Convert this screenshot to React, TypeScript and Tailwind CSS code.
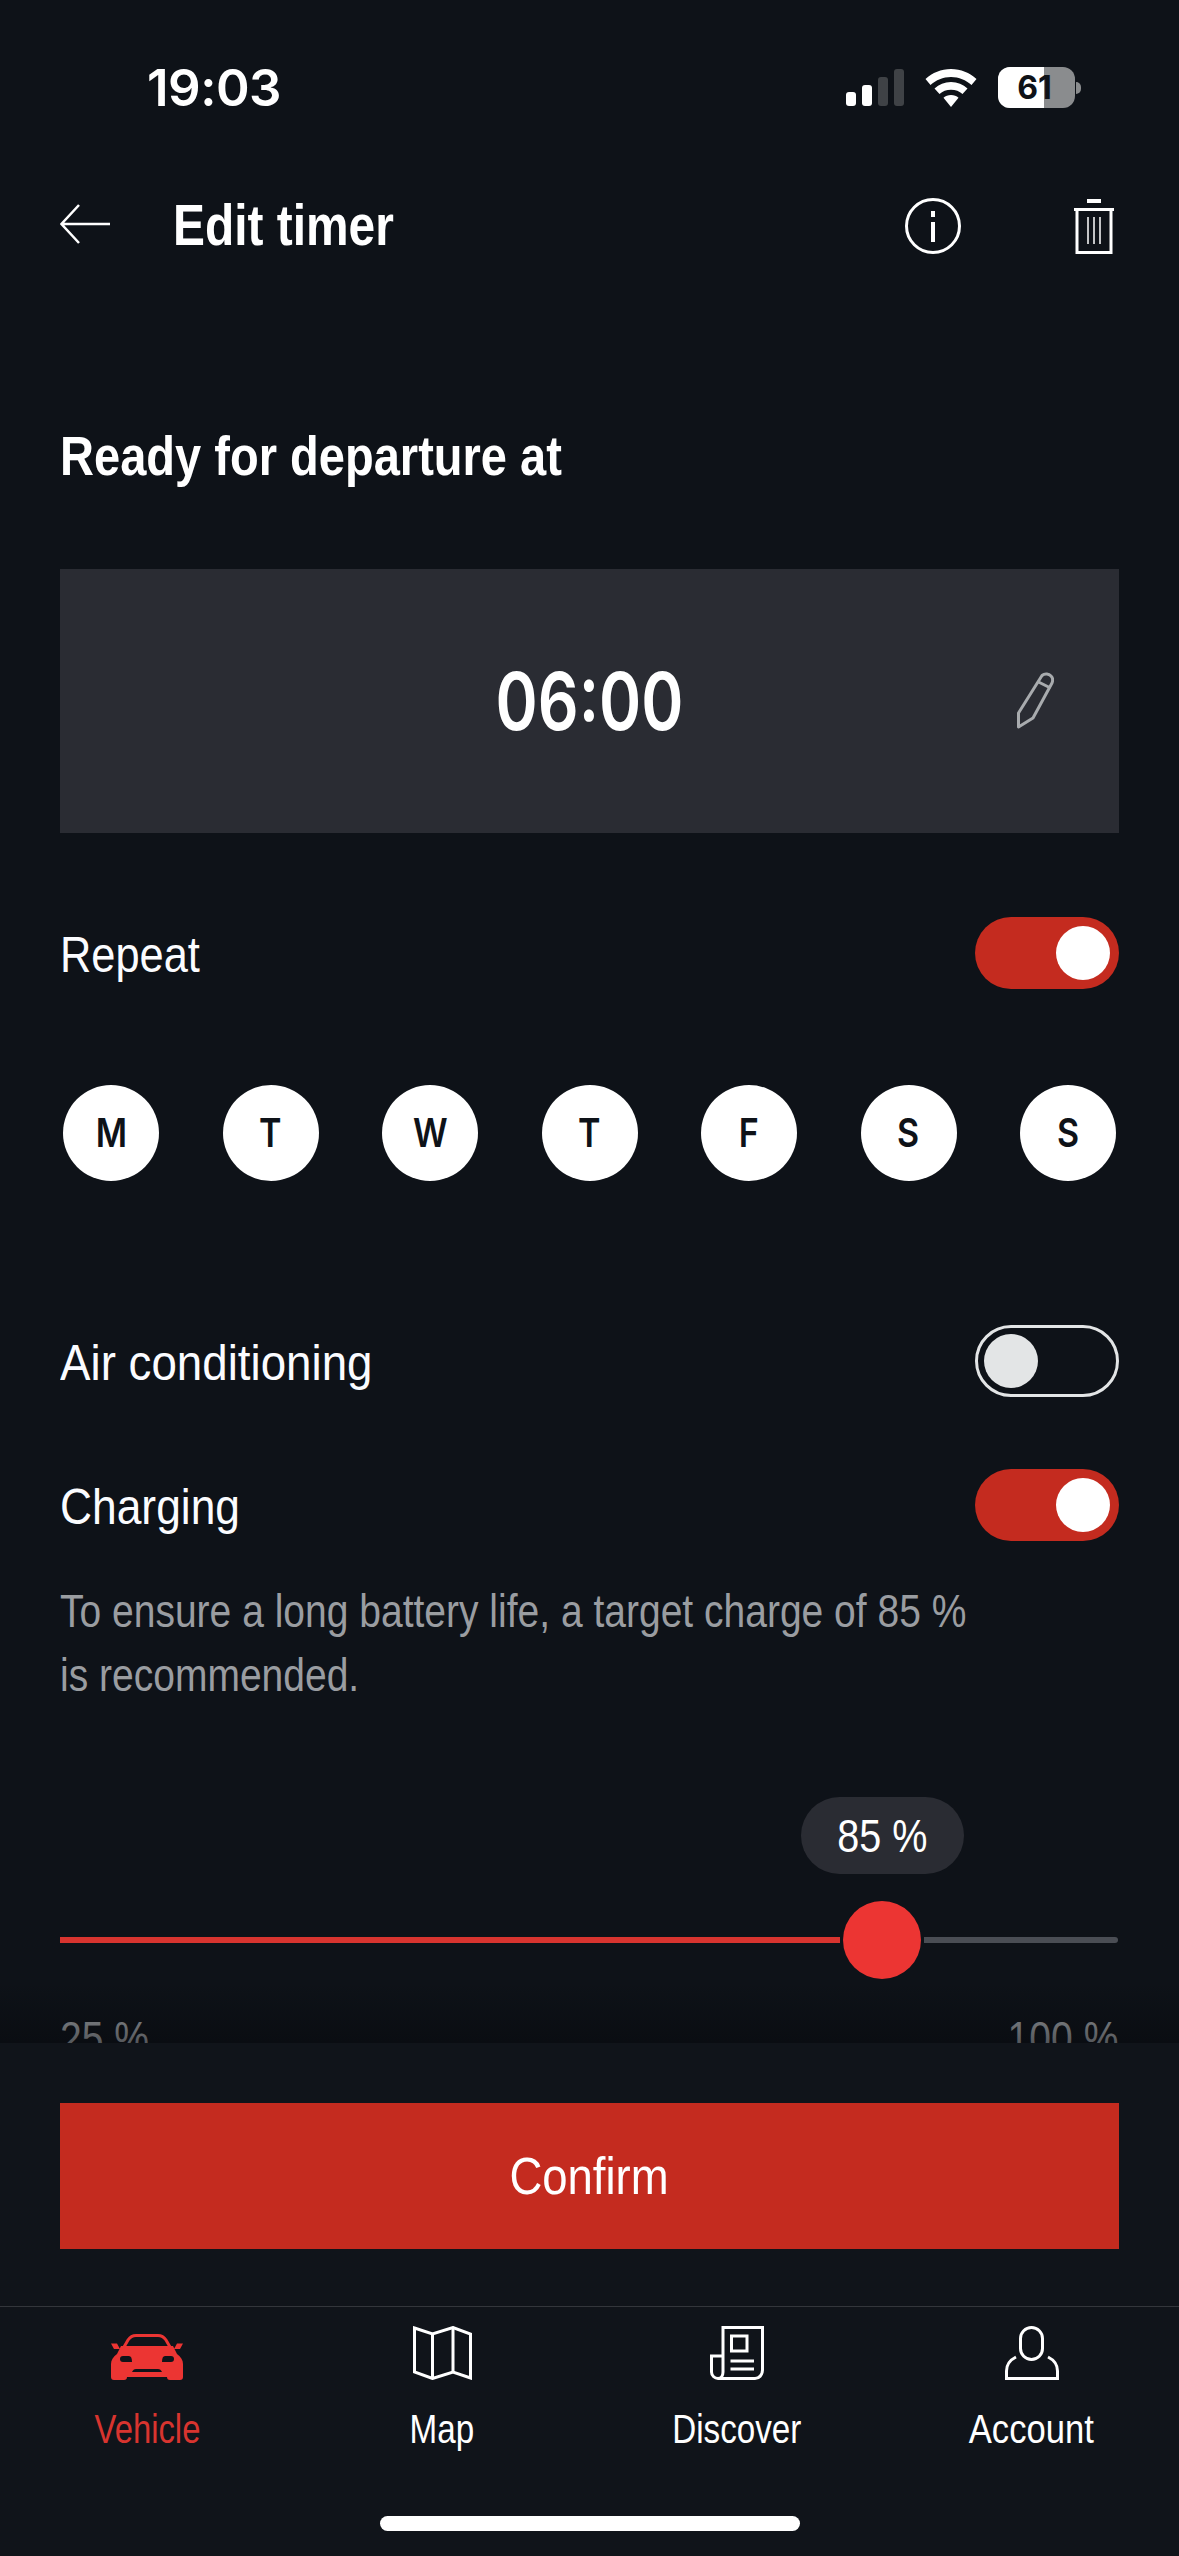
import React from "react";

const sans = "font-['Liberation_Sans',sans-serif]";

function Toggle({ on }: { on: boolean }) {
    if (on) {
        return (
            <div className="flex h-[72px] w-[144px] items-center justify-end rounded-full bg-[#c42b1f] pr-[9px]">
                <div className="size-[54px] rounded-full bg-white" />
            </div>
        );
    }
    return (
        <div className="flex h-[72px] w-[144px] items-center justify-start rounded-full border-[3px] border-[#e3e5e6] pl-[6px]">
            <div className="size-[54px] rounded-full bg-[#e3e5e6]" />
        </div>
    );
}

function Row({ label, on, className, squeeze }: { label: string; on: boolean; className: string; squeeze: string }) {
    return (
        <div className={`flex h-[72px] items-center justify-between ${className}`}>
            <span className={`inline-block origin-left pt-[3px] text-[50px] leading-none text-[#fbfcff] ${squeeze}`}>{label}</span>
            <Toggle on={on} />
        </div>
    );
}

function StatusBar() {
    return (
        <div className="flex h-[164px] items-start justify-between pt-[67px] pl-[147px] pr-[98px]">
            <span className="font-['Inter',sans-serif] text-[51px] leading-[41px] font-semibold tracking-[-0.5px] text-white">19:03</span>
            <div className="flex items-center">
                <div className="flex h-[37px] items-end gap-[6px]">
                    <div className="h-[14px] w-[10px] rounded-[3px] bg-white" />
                    <div className="h-[21px] w-[10px] rounded-[3px] bg-white" />
                    <div className="h-[29px] w-[10px] rounded-[3px] bg-[#3f4246]" />
                    <div className="h-[37px] w-[10px] rounded-[3px] bg-[#3f4246]" />
                </div>
                <svg className="ml-[21px]" width="52" height="38" viewBox="0 0 52 38" fill="white">
                    <path d="M26 0C16 0 7.500 3.800 0.500 10L5.500 16C11 11 18 8 26 8C34 8 41 11 46.500 16L51.500 10C44.500 3.800 36 0 26 0Z" />
                    <path d="M26 13C19.500 13 14 15.300 9.500 19.500L14.500 25C17.500 22.300 21.500 20.800 26 20.800C30.500 20.800 34.500 22.300 37.500 25L42.500 19.500C38 15.300 32.500 13 26 13Z" />
                    <path d="M26 26C23 26 20.500 27 18.500 28.800L26 38L33.500 28.800C31.500 27 29 26 26 26Z" />
                </svg>
                <div className="relative ml-[21px] flex h-[41px] w-[77px] items-center justify-center overflow-hidden rounded-[12px] bg-[#8a8c8e]">
                    <div className="absolute inset-y-0 left-0 w-[46px] bg-white" />
                    <span className="relative pr-[4px] font-['Inter',sans-serif] text-[32px] leading-none font-bold text-[#0e1218]">61</span>
                </div>
                <div className="ml-[1px] h-[12px] w-[5px] rounded-r-full bg-[#8a8c8e]" />
            </div>
        </div>
    );
}

function Header() {
    return (
        <div className="flex h-[120px] items-center">
            <svg width="50" height="40" viewBox="0 0 50 40" fill="none" stroke="white" strokeWidth="2.500" className="shrink-0">
                <path d="M19 1L1.500 20L19 39M1.500 20H50" />
            </svg>
            <h1 className="ml-[63px] origin-left scale-x-[0.84] pt-[2px] text-[57px] leading-none font-bold whitespace-nowrap text-white">Edit timer</h1>
            <svg width="56" height="56" viewBox="0 0 56 56" fill="none" stroke="white" strokeWidth="3" className="ml-auto mt-[4px]">
                <circle cx="28" cy="28" r="26.500" />
                <path d="M28 13V19M28 24V44" strokeWidth="4" />
            </svg>
            <svg width="40" height="55" viewBox="0 0 40 55" fill="none" stroke="white" strokeWidth="3" className="ml-[113px] mr-[5px] mt-[4px]">
                <path d="M13 2H27" strokeWidth="4" />
                <path d="M0 10.500H40M3 11V53.500H37V11" />
                <path d="M14 18V45M20 18V45M26 18V45" strokeWidth="1.500" />
            </svg>
        </div>
    );
}

function Pencil() {
    return (
        <svg width="38" height="57" viewBox="0 0 38 57" fill="none" stroke="#a8abae" strokeWidth="3">
            <path d="M26 3.500C29 1 33 2 35 4C37 6 37 8.500 36 11L17 46L2.500 55V41L26 3.500Z" strokeLinejoin="round" />
            <path d="M22.500 10L34.500 16" />
        </svg>
    );
}

function CarIcon() {
    return (
        <svg width="72" height="46" viewBox="0 0 72 46" fill="#ec3533">
            <path d="M13 13L17 6C19 3 21 1.500 25 1.500H47C51 1.500 53 3 55 6L59 13" fill="none" stroke="#ec3533" strokeWidth="3" />
            <path d="M0 9.500H6L9 15H3ZM72 9.500H66L63 15H69Z" />
            <path
                fillRule="evenodd"
                d="M10 12H62L66 20C70 23 72 26 72 30V43A3 3 0 0 1 69 46H59A3 3 0 0 1 56 43H16A3 3 0 0 1 13 46H3A3 3 0 0 1 0 43V30C0 26 2 23 6 20L10 12ZM9 25C9 23 10 22 12 22H18C20 22 21 24 21 28H12C10 28 9 27 9 25ZM63 25C63 23 62 22 60 22H54C52 22 51 24 51 28H60C62 28 63 27 63 25ZM21 38C22 36 23 35 25 35H47C49 35 50 36 51 38H21Z"
            />
        </svg>
    );
}

function MapIcon() {
    return (
        <svg width="59" height="54" viewBox="0 0 59 54" fill="none" stroke="white" strokeWidth="3">
            <path d="M1.500 2L19.500 8L40 1.500L57.500 8V52L40 46L19.500 52.500L1.500 46Z" />
            <path d="M19.500 8V52.500M40 1.500V46" />
        </svg>
    );
}

function DiscoverIcon() {
    return (
        <svg width="54" height="54" viewBox="0 0 54 54" fill="none" stroke="white" strokeWidth="3">
            <path d="M13 46V1.500H52.500V44C52.500 49 49 52.500 45 52.500H8" />
            <path d="M13 30H1.500V46C1.500 50 5 52.500 8 52.500C11 52.500 13 50 13 46" />
            <path d="M21.500 10H37V25H21.500ZM20.500 35H44M20.500 43H44" />
        </svg>
    );
}

function AccountIcon() {
    return (
        <svg width="54" height="54" viewBox="0 0 54 54" fill="none" stroke="white" strokeWidth="3">
            <rect x="15.500" y="1.500" width="22" height="32" rx="11" />
            <path d="M11 31C5 34 1.500 39 1.500 45V52.500H52.500V45C52.500 39 49 34 43 31" />
        </svg>
    );
}

const days = ["M", "T", "W", "T", "F", "S", "S"];

const tabs = [
    { label: "Vehicle", icon: <CarIcon />, color: "text-[#d8342f] scale-x-[0.82]" },
    { label: "Map", icon: <MapIcon />, color: "text-white scale-x-[0.83]" },
    { label: "Discover", icon: <DiscoverIcon />, color: "text-white scale-x-[0.83]" },
    { label: "Account", icon: <AccountIcon />, color: "text-white scale-x-[0.865]" },
];

export default function App() {
    return (
        <div className={`flex h-[2556px] w-[1179px] flex-col overflow-hidden bg-[#0e1218] ${sans}`}>
            <div className="relative h-[2043px] shrink-0 overflow-hidden">
                <StatusBar />
                <div className="px-[60px]">
                    <Header />
                    <h2 className="mt-[136px] h-[73px] origin-left scale-x-[0.84] text-[56px] leading-[72px] font-bold whitespace-nowrap text-white">Ready for departure at</h2>

                    <div className="relative mt-[76px] flex h-[264px] items-center justify-center bg-[#2a2c33]">
                        <span className="inline-block scale-x-[0.8] font-['Inter',sans-serif] text-[80px] leading-none font-semibold text-white">06:00</span>
                        <div className="absolute right-[65px] top-[103px]">
                            <Pencil />
                        </div>
                    </div>

                    <Row label="Repeat" on className="mt-[84px]" squeeze="scale-x-[0.867]" />

                    <div className="mt-[96px] flex justify-between px-[3px]">
                        {days.map((d, i) => (
                            <div key={i} className="flex size-[96px] items-center justify-center rounded-full bg-white font-['Inter',sans-serif] text-[40px] font-semibold text-[#0e1218]">
                                <span className="inline-block scale-x-[0.85]">{d}</span>
                            </div>
                        ))}
                    </div>

                    <Row label="Air conditioning" on={false} className="mt-[144px]" squeeze="scale-x-[0.914]" />
                    <Row label="Charging" on className="mt-[72px]" squeeze="scale-x-[0.887]" />

                    <p className="mt-[38px] origin-left scale-x-[0.848] text-[46px] leading-[64px] whitespace-nowrap text-[#9a9da1]">
                        To ensure a long battery life, a target charge of 85 %
                        <br />
                        is recommended.
                    </p>

                    <div className="mt-[90px] flex justify-end pr-[155px]">
                        <div className="flex h-[77px] w-[163px] items-center justify-center rounded-full bg-[#2a2c33] text-[46px] leading-none text-white">
                            <span className="inline-block scale-x-[0.86]">85 %</span>
                        </div>
                    </div>

                    <div className="mt-[27px] flex h-[78px] items-center">
                        <div className="h-[6px] flex-1 bg-[#d8342f]" />
                        <div className="mx-[3px] size-[78px] shrink-0 rounded-full bg-[#ec3533]" />
                        <div className="mr-[1px] h-[6px] w-[194px] rounded-r-full bg-[#4a4d54]" />
                    </div>

                    <div className="mt-[27px] flex justify-between pr-[1px] text-[46px] leading-[64px] text-[#a4a7ab]">
                        <span className="inline-block origin-left scale-x-[0.85]">25 %</span>
                        <span className="inline-block origin-right scale-x-[0.85]">100 %</span>
                    </div>
                </div>
                <div className="absolute inset-x-0 bottom-0 h-[60px] bg-gradient-to-b from-transparent to-[#06080c]/50" />
            </div>

            <div className="flex flex-1 flex-col bg-[#10141a]">
                <div className="mx-[60px] mt-[60px] flex h-[146px] items-center justify-center bg-[#c42b1f] text-[52px] leading-none text-white">
                    <span className="inline-block scale-x-[0.875]">Confirm</span>
                </div>
                <div className="mt-[57px] grid grid-cols-4 border-t border-[#33363b] pt-[19px]">
                    {tabs.map((t) => (
                        <div key={t.label} className="flex flex-col items-center">
                            <div className="flex h-[54px] items-end">{t.icon}</div>
                            <span className={`mt-[26px] inline-block text-[40px] leading-[46px] ${t.color}`}>{t.label}</span>
                        </div>
                    ))}
                </div>
                <div className="mx-auto mt-[64px] h-[15px] w-[420px] rounded-full bg-white" />
            </div>
        </div>
    );
}
